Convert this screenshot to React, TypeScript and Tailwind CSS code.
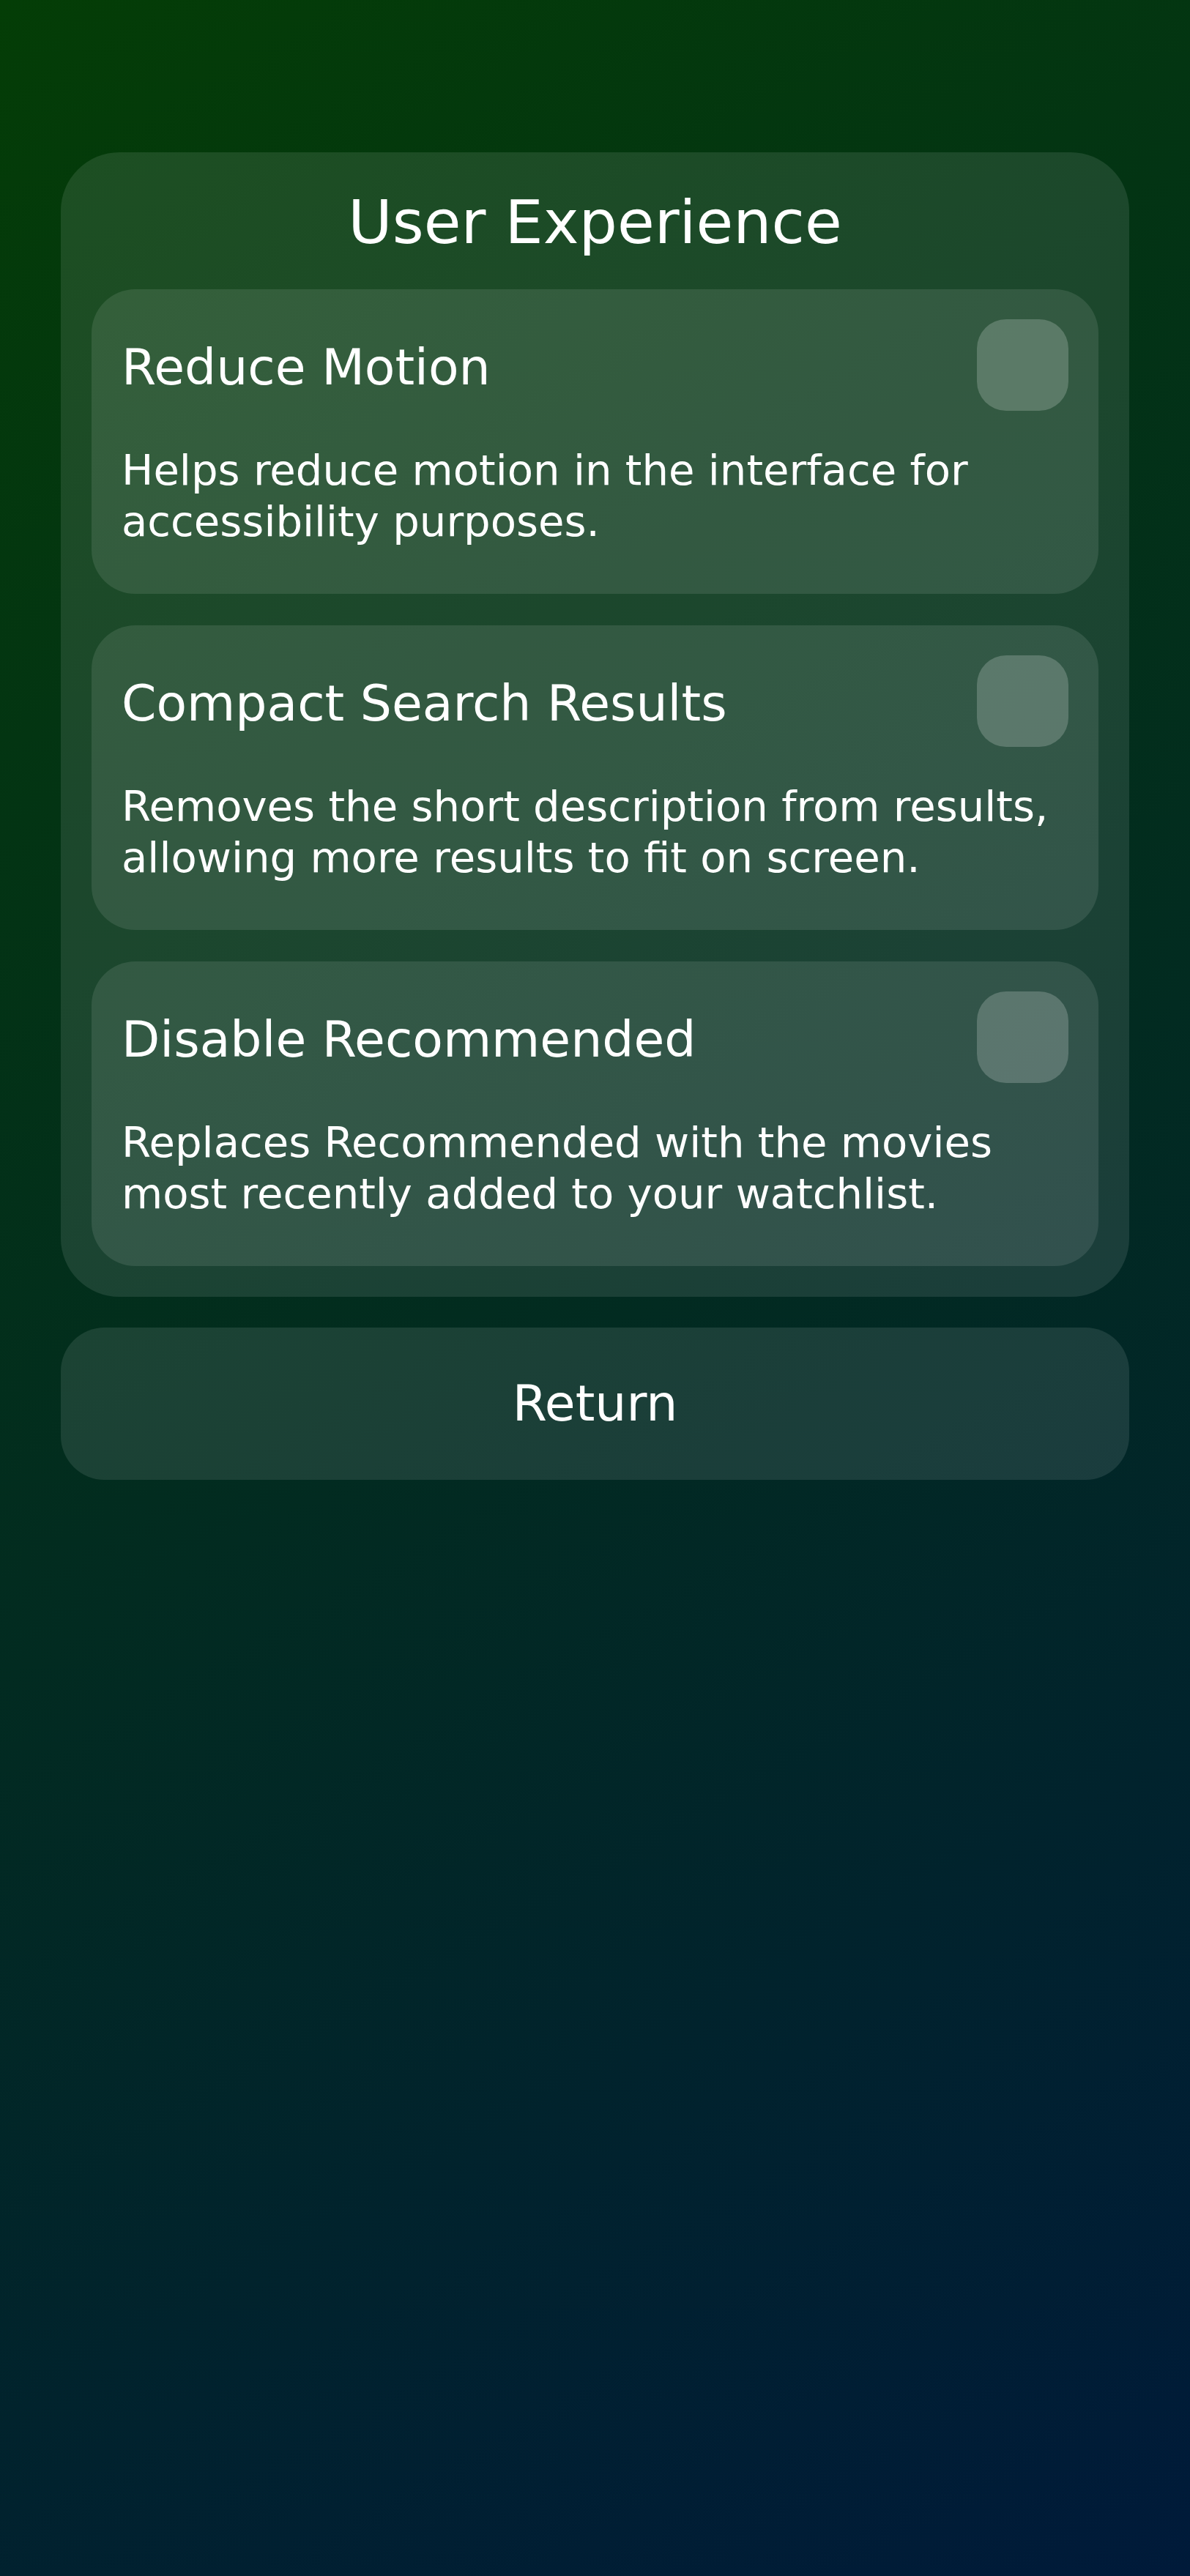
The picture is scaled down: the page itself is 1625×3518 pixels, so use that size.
import React, { useState } from 'react'

type Setting = {
  key: string
  title: string
  description: string
}

const settings: Setting[] = [
  {
    key: 'reduceMotion',
    title: 'Reduce Motion',
    description: 'Helps reduce motion in the interface for accessibility purposes.',
  },
  {
    key: 'compactResults',
    title: 'Compact Search Results',
    description: 'Removes the short description from results, allowing more results to fit on screen.',
  },
  {
    key: 'disableRecommended',
    title: 'Disable Recommended',
    description: 'Replaces Recommended with the movies most recently added to your watchlist.',
  },
]

const SettingCard: React.FC<{
  setting: Setting
  checked: boolean
  onToggle: () => void
}> = ({ setting, checked, onToggle }) => {
  return (
    <div className="rounded-[60px] bg-white/10 px-[41px] pt-[41px] pb-[64px]">
      <div className="flex h-[125px] items-center justify-between">
        <h2 className="pt-[7px] text-[68px] leading-[80px] font-normal">{setting.title}</h2>
        <button
          type="button"
          aria-pressed={checked}
          onClick={onToggle}
          className={`size-[125px] shrink-0 rounded-[40px] ${checked ? 'bg-white/40' : 'bg-white/20'}`}
        />
      </div>
      {/* small negative margin so the longest line keeps to one row */}
      <p className="mt-[46px] mr-[-16px] text-[57.7px] leading-[70px]">{setting.description}</p>
    </div>
  )
}

const App: React.FC = () => {
  const [values, setValues] = useState<Record<string, boolean>>({})

  const toggle = (key: string) => {
    setValues((prev) => ({ ...prev, [key]: !prev[key] }))
  }

  return (
    <div className="min-h-screen w-full bg-[linear-gradient(150deg,#043d06,#001a3a)] px-[83px] pt-[208px] font-['DejaVu_Sans',sans-serif] text-white">
      <div className="flex flex-col rounded-[80px] bg-white/10 px-[42px] pt-[46px] pb-[42px]">
        <h1 className="mb-[42px] text-center text-[82.5px] leading-[99px] font-normal">User Experience</h1>
        <div className="flex flex-col gap-[43px]">
          {settings.map((s) => (
            <SettingCard
              key={s.key}
              setting={s}
              checked={!!values[s.key]}
              onToggle={() => toggle(s.key)}
            />
          ))}
        </div>
      </div>

      <button
        type="button"
        className="mt-[42px] flex h-[208px] w-full items-center justify-center rounded-[60px] bg-white/10 text-[68px] leading-[80px]"
      >
        Return
      </button>
    </div>
  )
}

export default App
